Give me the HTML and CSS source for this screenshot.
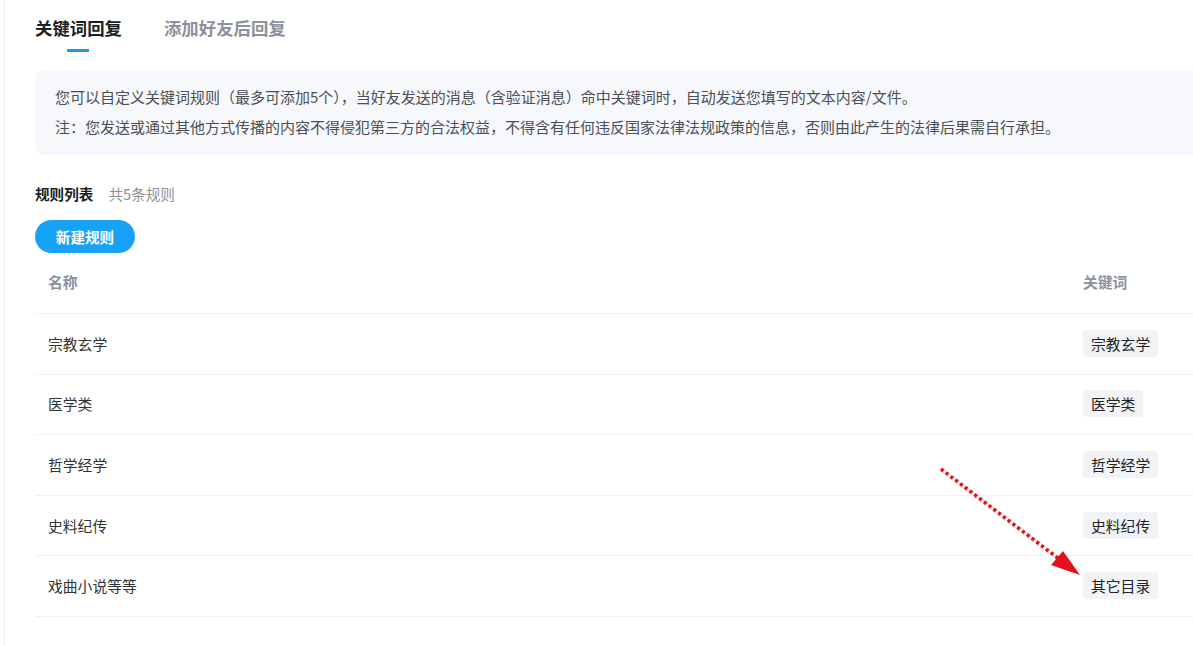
FILE: index.html
```html
<!DOCTYPE html>
<html lang="zh-CN">
<head>
  <meta charset="UTF-8" />
  <title>关键词回复</title>
  <link rel="stylesheet" href="styles.css">
</head>
<body>
  <div class="page">
    <!-- Tabs -->
    <div class="tabs">
      <div class="tab active">关键词回复</div>
      <div class="tab">添加好友后回复</div>
    </div>

    <!-- Notice -->
    <div class="notice">
      <p>您可以自定义关键词规则（最多可添加5个），当好友发送的消息（含验证消息）命中关键词时，自动发送您填写的文本内容/文件。</p>
      <p>注：您发送或通过其他方式传播的内容不得侵犯第三方的合法权益，不得含有任何违反国家法律法规政策的信息，否则由此产生的法律后果需自行承担。</p>
    </div>

    <div class="list-title">
      <strong>规则列表</strong>
      <span>共5条规则</span>
    </div>

    <button class="btn-new">新建规则</button>

    <!-- Rules table -->
    <div class="table">
      <div class="row head">
        <div class="cell">名称</div>
        <div class="cell">关键词</div>
      </div>
      <div class="row">
        <div class="cell">宗教玄学</div>
        <div class="cell"><span class="tag">宗教玄学</span></div>
      </div>
      <div class="row">
        <div class="cell">医学类</div>
        <div class="cell"><span class="tag">医学类</span></div>
      </div>
      <div class="row">
        <div class="cell">哲学经学</div>
        <div class="cell"><span class="tag">哲学经学</span></div>
      </div>
      <div class="row">
        <div class="cell">史料纪传</div>
        <div class="cell"><span class="tag">史料纪传</span></div>
      </div>
      <div class="row">
        <div class="cell">戏曲小说等等</div>
        <div class="cell"><span class="tag">其它目录</span></div>
      </div>
    </div>
  </div>

  <!-- annotation arrow -->
  <svg class="arrow" width="160" height="130" viewBox="0 0 160 130">
    <line x1="4" y1="4" x2="126" y2="97" stroke="#f3b0a8" stroke-width="5" stroke-dasharray="3 3" opacity="0.5" transform="translate(1 1)"/>
    <line x1="4" y1="4" x2="126" y2="97" stroke="#d8101c" stroke-width="3.5" stroke-dasharray="3 3"/>
    <polygon points="143,110 114,100 126,86" fill="#e3121c"/>
  </svg>
</body>
</html>
```

FILE: styles.css
```css
html, body {
  margin: 0;
  padding: 0;
}
body {
  font-family: "Noto Sans CJK SC", "Noto Sans", sans-serif;
  background: #fff;
  color: #333;
  width: 1193px;
  height: 645px;
  overflow: hidden;
  position: relative;
}
.page {
  margin-left: 4px;
  border-left: 1px solid #eceef2;
  padding-left: 30px;
  width: 1220px;
  min-height: 645px;
}
p {
  margin: 0;
}

/* tabs */
.tabs {
  display: flex;
  gap: 42px;
  height: 70px;
}
.tab {
  position: relative;
  font-size: 17.4px;
  font-weight: bold;
  color: #8c919b;
  line-height: 24px;
  padding-top: 16px;
  height: 54px;
  box-sizing: border-box;
}
.tab.active {
  color: #1c1f23;
}
.tab.active::after {
  content: "";
  position: absolute;
  left: 50%;
  margin-left: -11px;
  top: 49px;
  width: 22px;
  height: 3px;
  background: #1a9be6;
}

/* notice */
.notice {
  background: #f6f8fb;
  border-radius: 8px;
  padding: 12px 20px 13px;
  font-size: 15px;
  line-height: 30px;
  color: #4b4f56;
}

.list-title {
  margin-top: 28px;
  font-size: 14.6px;
  line-height: 22px;
  display: flex;
  gap: 15px;
}
.list-title strong {
  color: #1c1f23;
}
.list-title span {
  color: #8c919b;
}

.btn-new {
  margin-top: 15px;
  width: 100px;
  height: 33px;
  border: none;
  border-radius: 17px;
  background: #18a2f5;
  color: #fff;
  font-family: inherit;
  font-size: 14.6px;
  font-weight: bold;
  cursor: pointer;
  display: block;
}

/* table */
.table {
  font-size: 14.8px;
}
.row {
  display: grid;
  grid-template-columns: 1035px 1fr;
  box-sizing: border-box;
  height: 60.6px;
  align-items: center;
  border-bottom: 1px solid #eff1f4;
}
.row.head {
  height: 61px;
  color: #8c919b;
  font-weight: bold;
}
.cell {
  padding-left: 13px;
  padding-bottom: 1px;
}
.row.head .cell {
  padding-bottom: 3px;
}
.tag {
  display: inline-block;
  background: #f1f3f7;
  border-radius: 4px;
  padding: 0 8px;
  line-height: 27px;
  color: #222;
}

/* annotation */
.arrow {
  position: absolute;
  left: 937px;
  top: 465px;
}
```
